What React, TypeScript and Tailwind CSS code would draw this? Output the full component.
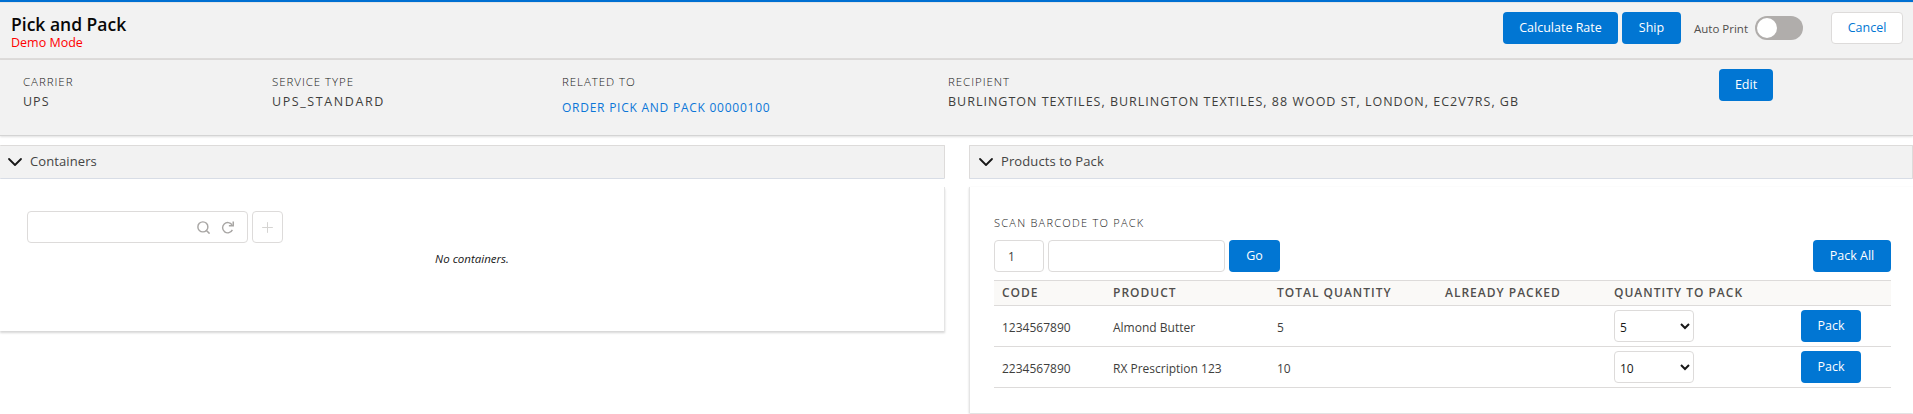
import { ChevronDown, Plus, Search } from "lucide-react";

const products = [
  { code: "1234567890", name: "Almond Butter", total: 5 },
  { code: "2234567890", name: "RX Prescription 123", total: 10 },
];

const blueButton =
  "bg-[#0176d3] text-white text-[12.5px] rounded-[4px] h-8 flex items-center justify-center";

function SectionHeader({ title, inset }: { title: string; inset?: boolean }) {
  return (
    <div
      className={`h-[34px] bg-[#f2f2f2] border border-[#dddbda] border-b-[#d8dde6] flex items-center rounded-[1px] ${
        inset ? "pl-1" : "border-l-0 pl-[3px]"
      }`}
    >
      <ChevronDown size={24} strokeWidth={1.8} className="text-[#181818]" />
      <span className="ml-[3px] text-[13px] tracking-[0.1px] text-[#444]">{title}</span>
    </div>
  );
}

function RedoIcon() {
  return (
    <svg width="14" height="14" viewBox="0 0 24 24" fill="none" stroke="#a8a6a4" strokeWidth="2.4">
      <path d="M19 8.5A8.8 8.8 0 1 0 19.5 17" />
      <path d="M21 2.5v7.5h-7.5" strokeWidth="2.6" />
    </svg>
  );
}

function Info({
  label,
  value,
  width,
  link,
  valueTracking = "tracking-[1px]",
}: {
  label: string;
  value: string;
  width: string;
  link?: boolean;
  valueTracking?: string;
}) {
  return (
    <div className={width}>
      <p className="text-[11.5px] leading-[16px] font-light tracking-[0.95px] text-[#181818]">{label}</p>
      {link ? (
        <p className="text-[12px] leading-[16px] tracking-[0.75px] mt-[10px] text-[#0b76d8]">{value}</p>
      ) : (
        <p className={`text-[12.5px] leading-[16px] mt-1 text-[#3e3e3c] ${valueTracking}`}>{value}</p>
      )}
    </div>
  );
}

export default function App() {
  return (
    <div className="h-[414px] bg-white overflow-hidden font-['Open_Sans',sans-serif] text-[#3e3e3c]">
      <div className="h-[2px] bg-[#0070d2]" />
      <header className="h-[58px] bg-[#f2f2f2] border-t border-[#e5e5e5] border-b-2 border-b-[#dddbda] flex items-start justify-between pl-[11px] pr-[10px]">
        <div className="pt-[11px]">
          <h1 className="text-[17.5px] leading-[20px] font-semibold text-[#080707]">Pick and Pack</h1>
          <p className="text-[12.5px] leading-[14px] mt-[2px] text-[#ff0000]">Demo Mode</p>
        </div>
        <div className="flex items-start pt-[9px]">
          <button className={`${blueButton} w-[115px]`}>Calculate Rate</button>
          <button className={`${blueButton} w-[59px] ml-1`}>Ship</button>
          <span className="ml-[13px] mt-[9px] w-[53px] whitespace-nowrap text-[11.5px] leading-[16px] text-[#514f4d]">
            Auto Print
          </span>
          <div className="ml-2 mt-1 w-[48px] h-6 rounded-full bg-[#b0adab] p-[2px]">
            <div className="w-5 h-5 rounded-full bg-white" />
          </div>
          <button className="ml-7 w-[72px] h-8 bg-white border border-[#dddbda] rounded-[4px] text-[12.5px] text-[#0176d3]">
            Cancel
          </button>
        </div>
      </header>

      <section className="h-[76px] bg-[#f2f2f2] border-b border-[#d4d4d4] shadow-[0_1px_2px_rgba(0,0,0,0.12)] flex items-start pl-[23px]">
        <div className="flex pt-[14px]">
          <Info label="CARRIER" value="UPS" width="w-[249px]" />
          <Info label="SERVICE TYPE" value="UPS_STANDARD" width="w-[290px]" valueTracking="tracking-[1.6px]" />
          <Info label="RELATED TO" value="ORDER PICK AND PACK 00000100" width="w-[386px]" link />
          <Info
            label="RECIPIENT"
            value="BURLINGTON TEXTILES, BURLINGTON TEXTILES, 88 WOOD ST, LONDON, EC2V7RS, GB"
            width="w-[771px]"
          />
        </div>
        <button className={`${blueButton} w-[54px] mt-[9px]`}>Edit</button>
      </section>

      <main className="grid grid-cols-[945px_944px] gap-x-6 mt-[9px]">
        <div>
          <SectionHeader title="Containers" />
          <div className="mt-2 h-[144px] bg-white border-r border-[#e5e5e5] shadow-[0_2px_2px_rgba(0,0,0,0.16)] pt-[24px]">
            <div className="flex pl-[27px]">
              <div className="w-[221px] h-8 border border-[#dddbda] rounded-[4px] flex items-center justify-end gap-[10px] pr-[12px]">
                <Search size={15} strokeWidth={2.3} className="text-[#a8a6a4]" />
                <RedoIcon />
              </div>
              <div className="ml-1 w-[31px] h-8 border border-[#dddbda] rounded-[4px] flex items-center justify-center">
                <Plus size={17} strokeWidth={1.4} className="text-[#d4d3d1]" />
              </div>
            </div>
            <p className="text-center text-[11.5px] leading-[14px] italic text-[#181818] mt-[9px]">No containers.</p>
          </div>
        </div>

        <div>
          <SectionHeader title="Products to Pack" inset />
          <div className="mt-2 h-[226px] bg-white border-l border-[#e5e5e5] shadow-[0_1px_2px_rgba(0,0,0,0.16)] pl-6 pr-[22px] pt-[29px]">
            <p className="text-[11px] leading-[14px] font-light tracking-[1.25px] text-[#181818]">
              SCAN BARCODE TO PACK
            </p>
            <div className="flex mt-[10px]">
              <input
                readOnly
                value="1"
                className="w-[50px] h-8 border border-[#dddbda] rounded-[4px] pl-[13px] text-[12px] outline-none"
              />
              <input readOnly className="ml-1 w-[177px] h-8 border border-[#dddbda] rounded-[4px] outline-none" />
              <button className={`${blueButton} w-[51px] ml-1`}>Go</button>
              <button className={`${blueButton} w-[78px] ml-auto`}>Pack All</button>
            </div>
            <table className="w-full mt-2 table-fixed border-collapse text-[12px]">
              <colgroup>
                <col className="w-[111px]" />
                <col className="w-[164px]" />
                <col className="w-[168px]" />
                <col className="w-[169px]" />
                <col className="w-[187px]" />
                <col />
              </colgroup>
              <thead>
                <tr className="h-[25px] bg-[#faf9f7] border-y border-[#dddbda] text-[12px] tracking-[1px] text-[#514f4d]">
                  <th className="pl-2 text-left font-semibold">CODE</th>
                  <th className="pl-2 text-left font-semibold">PRODUCT</th>
                  <th className="pl-2 text-left font-semibold">TOTAL QUANTITY</th>
                  <th className="pl-2 text-left font-semibold">ALREADY PACKED</th>
                  <th className="pl-2 text-left font-semibold">QUANTITY TO PACK</th>
                  <th />
                </tr>
              </thead>
              <tbody>
                {products.map((p) => (
                  <tr key={p.code} className="h-[41px] border-b border-[#dddbda]">
                    <td className="pl-2 pt-[3px]">{p.code}</td>
                    <td className="pl-2 pt-[3px]">{p.name}</td>
                    <td className="pl-2 pt-[3px]">{p.total}</td>
                    <td />
                    <td className="pl-2">
                      <select
                        defaultValue={p.total}
                        className="block w-20 h-8 pl-[1px] pt-[2px] bg-white border border-[#dddbda] rounded-[4px] text-[12px] text-[#181818]"
                      >
                        <option value={p.total}>{p.total}</option>
                      </select>
                    </td>
                    <td className="pl-2">
                      <button className={`${blueButton} w-[60px]`}>Pack</button>
                    </td>
                  </tr>
                ))}
              </tbody>
            </table>
          </div>
        </div>
      </main>
    </div>
  );
}
